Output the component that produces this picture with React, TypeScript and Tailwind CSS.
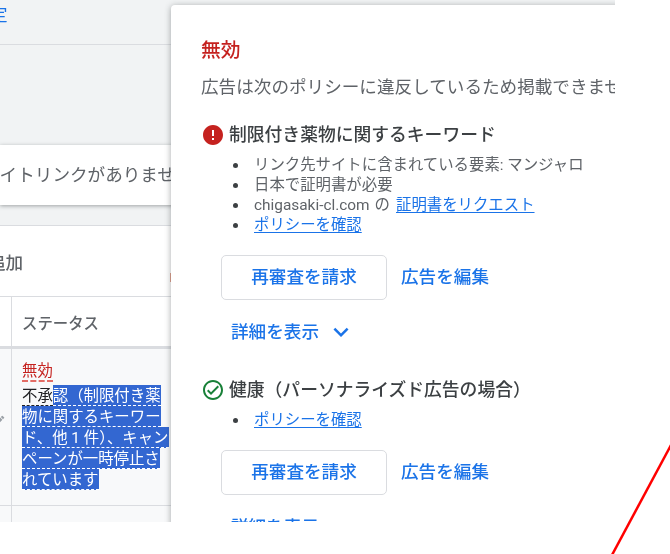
import React from "react";

const blue = "text-[#1a73e8]";
const selectedLine = "h-[21px] w-fit bg-[#3367d1] text-white border-b border-dashed border-white";

function ReviewActions() {
  return (
    <div className="flex items-center ml-[20px] mt-[20px]">
      <button className={`w-[166px] h-[45px] rounded-[5px] border border-[#dadce0] bg-white text-[17.6px] font-medium ${blue}`}>再審査を請求</button>
      <span className={`ml-[14px] text-[17.6px] font-medium ${blue}`}>広告を編集</span>
    </div>
  );
}

function Details() {
  return (
    <div className={`flex items-center ml-[30px] mt-[19px] h-[26px] text-[17.6px] font-medium ${blue}`}>
      <span>詳細を表示</span>
      <svg className="ml-[7px] w-[30px] h-[30px] shrink-0" viewBox="0 0 24 24" fill="currentColor"><path d="M7.41 8.59 12 13.17l4.59-4.58L18 10l-6 6-6-6z" /></svg>
    </div>
  );
}

function Policy({ text, ok }: { text: string; ok?: boolean }) {
  return (
    <div className="flex items-center h-[24px]">
      {ok ? (
        <svg className="w-[24px] h-[24px] text-[#188038]" viewBox="0 0 24 24" fill="currentColor"><path d="M12 2C6.48 2 2 6.48 2 12s4.48 10 10 10 10-4.48 10-10S17.52 2 12 2zm0 18c-4.41 0-8-3.59-8-8s3.59-8 8-8 8 3.59 8 8-3.59 8-8 8zm4.59-12.42L10 14.17l-2.59-2.58L6 13l4 4 8-8z" /></svg>
      ) : (
        <svg className="w-[24px] h-[24px] text-[#c5221f]" viewBox="0 0 24 24" fill="currentColor"><path d="M12 2C6.48 2 2 6.48 2 12s4.48 10 10 10 10-4.48 10-10S17.52 2 12 2zm1 15h-2v-2h2v2zm0-4h-2V7h2v6z" /></svg>
      )}
      <span className="ml-[4px] text-[17.8px] font-medium text-[#3c4043] whitespace-nowrap">{text}</span>
    </div>
  );
}

function Bullet({ children }: { children: React.ReactNode }) {
  return (
    <li className="flex items-center h-[20px]">
      <span className="w-[5px] h-[5px] rounded-full bg-[#3c4043] mr-[16px] shrink-0" />
      <span>{children}</span>
    </li>
  );
}

function Bullets({ children }: { children: React.ReactNode }) {
  return <ul className="ml-[32px] mt-[8px] text-[15.4px] leading-[20px] text-[#5f6368] whitespace-nowrap">{children}</ul>;
}

const link = "text-[#1a73e8] underline underline-offset-2";

export default function App() {
  return (
    <div className="relative w-[670px] h-[554px] bg-white overflow-hidden" style={{ fontFamily: '"Roboto","Noto Sans CJK JP",sans-serif' }}>
      <div className="relative w-[615px] h-[522px] overflow-hidden bg-[#f1f3f4] text-[#3c4043] blur-[0.3px]">
        <div className="h-[45px] border-b border-[#dadce0] text-[#1a73e8] text-[17.6px] leading-[30px]">
          <div className="-ml-[10px]">定</div>
        </div>
        <div className="mt-[100px] h-[60px] bg-white shadow-[0_1px_4px_rgba(60,64,67,0.45)] text-[17.6px] leading-[60px] text-[#5f6368] whitespace-nowrap overflow-hidden">
          <span className="-ml-[18px] inline-block">サイトリンクがありません</span>
        </div>
        <div className="mt-[20px] border-t border-[#dadce0] bg-white h-[297px]">
          <div className="h-[70px] text-[17.6px] leading-[74px] font-medium text-[#5f6368] whitespace-nowrap">
            <span className="-ml-[12px] inline-block">追加</span>
          </div>
          <div className="flex h-[53px] border-t border-b-[3px] border-[#dadce0]">
            <div className="w-[12px] border-r border-[#dadce0]" />
            <div className="pl-[10px] text-[15.4px] leading-[54px] font-medium text-[#5f6368]">ステータス</div>
          </div>
          <div className="flex h-[157px] border-b border-[#dadce0] bg-[#f8f9fa]">
            <div className="relative w-[12px] border-r border-[#dadce0]">
              <svg className="absolute -left-[8px] top-[65px] w-[14px] h-[14px] text-[#9aa0a6]" viewBox="0 0 24 24" fill="currentColor"><path d="M3 17.25V21h3.75L17.81 9.94l-3.75-3.75L3 17.25zM20.71 7.04a1 1 0 0 0 0-1.41l-2.34-2.34a1 1 0 0 0-1.41 0l-1.83 1.83 3.75 3.75 1.83-1.83z" /></svg>
            </div>
            <div className="pl-[10px] pt-[11px] w-[158px] text-[15.4px] leading-[22px] whitespace-nowrap">
              <div className="h-[25px]"><span className="text-[#c5221f] border-b-2 border-dashed border-[#d93025]/70">無効</span></div>
              <div className="flex w-fit h-[21px]">
                <span className="text-[#202124] border-b border-dashed border-[#202124]">不承</span>
                <span className={selectedLine}>認（制限付き薬</span>
              </div>
              <div className={selectedLine}>物に関するキーワー</div>
              <div className={selectedLine}>ド、他 1 件）、キャン</div>
              <div className={selectedLine}>ペーンが一時停止さ</div>
              <div className={selectedLine}>れています</div>
            </div>
          </div>
          <div className="flex h-[40px] bg-[#f8f9fa]">
            <div className="w-[12px] border-r border-[#dadce0]" />
          </div>
        </div>
        <span className="absolute left-[170px] top-[273px] w-[1px] h-[9px] bg-[#e0a08c]" />
        <div className="absolute left-[171px] top-[5px] w-[470px] h-[530px] bg-white rounded-t-[4px] shadow-[0_1px_6px_rgba(60,64,67,0.45)] pl-[30px] pt-[32px]">
          <div className="text-[19.8px] leading-[28px] font-medium text-[#c5221f]">無効</div>
          <div className="mt-[9px] text-[17.6px] leading-[26px] text-[#5f6368] whitespace-nowrap">広告は次のポリシーに違反しているため掲載できません</div>
          <div className="mt-[23px]"><Policy text="制限付き薬物に関するキーワード" /></div>
          <Bullets>
            <Bullet>リンク先サイトに含まれている要素: マンジャロ</Bullet>
            <Bullet>日本で証明書が必要</Bullet>
            <Bullet>chigasaki-cl.com<span className="ml-[5px]">の</span><span className={`ml-[6px] ${link}`}>証明書をリクエスト</span></Bullet>
            <Bullet><span className={link}>ポリシーを確認</span></Bullet>
          </Bullets>
          <ReviewActions />
          <Details />
          <div className="mt-[33px]"><Policy ok text="健康（パーソナライズド広告の場合）" /></div>
          <Bullets>
            <Bullet><span className={link}>ポリシーを確認</span></Bullet>
          </Bullets>
          <ReviewActions />
          <Details />
        </div>
      </div>
      <svg className="absolute inset-0 w-[670px] h-[554px] pointer-events-none" viewBox="0 0 670 554"><line x1="671" y1="445" x2="612" y2="555" stroke="#ff0000" strokeWidth="2.5" /></svg>
    </div>
  );
}
